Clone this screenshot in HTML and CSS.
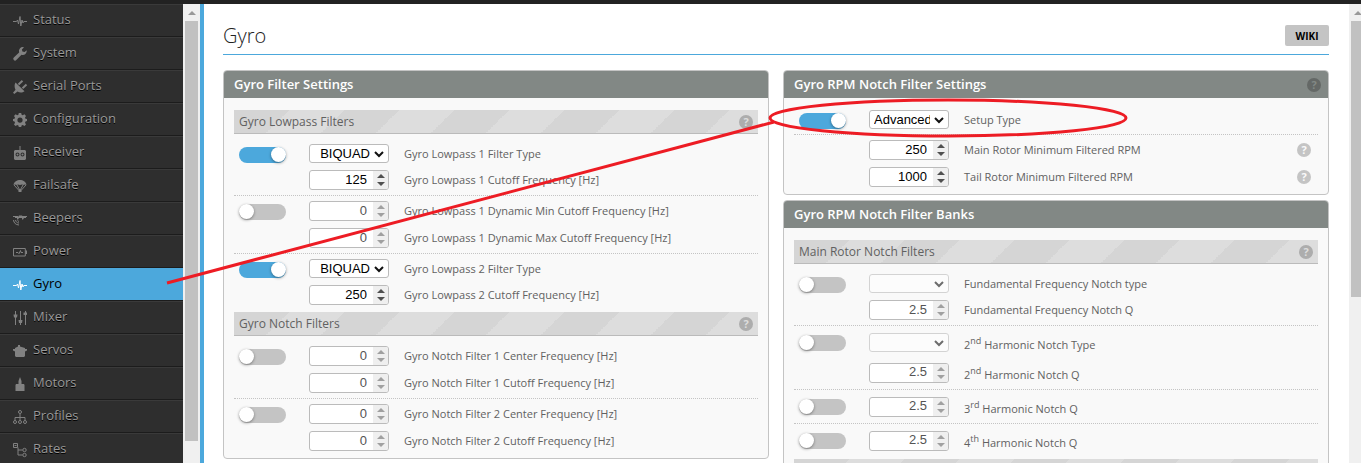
FILE: index.html
```html
<!DOCTYPE html>
<html lang="en">
<head>
<meta charset="utf-8">
<title>Gyro</title>
<link rel="stylesheet" href="styles.css">
</head>
<body>
<div class="topbar"></div>
<div class="app">
  <nav class="sidebar">
    <a class="nav-item" href="#"><svg class="nav-icon" viewBox="0 0 14 14"><path class="line" d="M0 7.500h3.500l1-1.500 1 4 1.500-7.500.800 9.500 1.200-6 1 3 .8-1.500H14"/></svg>Status</a>
    <a class="nav-item" href="#"><svg class="nav-icon" viewBox="0 0 14 14"><path d="M13.700 3.200a4 4 0 0 1-5.200 4.600L3.300 13a1.700 1.700 0 0 1-2.500-2.500l5.300-5.100A4 4 0 0 1 11 .3L8.900 2.500l.5 2.100 2.200.5z"/></svg>System</a>
    <a class="nav-item" href="#"><svg class="nav-icon" viewBox="0 0 14 14"><path d="M2.500 2.500l9 8.800c-2 1.600-5 1.600-7 .3L1.300 14 0 12.700l2.500-2.900C1.400 7.600 1.200 4.600 2.500 2.500z"/><path class="line thick" d="M5.500 4.500L9.500.8M9.500 8.300l4-3.700"/></svg>Serial Ports</a>
    <a class="nav-item" href="#"><svg class="nav-icon" viewBox="0 0 14 14"><path fill-rule="evenodd" d="M5.800 0h2.400l.4 1.800 1.200.5 1.600-1 1.600 1.600-1 1.600.5 1.200 1.500.4v2l-1.500.5-.5 1.200 1 1.600-1.600 1.600-1.600-1-1.200.5-.4 1.500H5.800l-.4-1.500-1.200-.5-1.600 1L1 11.400l1-1.600-.5-1.200L0 8.100v-2l1.500-.4.500-1.200-1-1.600 1.600-1.600 1.600 1 1.200-.5zM7 4.500a2.600 2.600 0 1 0 0 5.200 2.600 2.600 0 0 0 0-5.200z"/></svg>Configuration</a>
    <a class="nav-item" href="#"><svg class="nav-icon" viewBox="0 0 14 14"><path fill-rule="evenodd" d="M6.500 0h1v4H12l1 1v8l-1 1H2l-1-1V5l1-1h4.500zM4.500 6.500a2 2 0 1 0 0 4 2 2 0 0 0 0-4zm5 0a2 2 0 1 0 0 4 2 2 0 0 0 0-4z"/><circle cx="4.500" cy="8.500" r="1"/><circle cx="9.500" cy="8.500" r="1"/></svg>Receiver</a>
    <a class="nav-item" href="#"><svg class="nav-icon" viewBox="0 0 14 14"><path d="M.5 6C1 2.500 4 1 7 1s6 1.500 6.500 5L12 5.500 10.500 6 9 5.500 7 6l-2-.5L3.500 6 2 5.500z"/><path class="line" d="M1 6l5 5.500M4 6l2.700 5M10 6l-2.700 5M13 6l-5 5.500"/><path d="M5.500 10.500h3V13h-3z"/></svg>Failsafe</a>
    <a class="nav-item" href="#"><svg class="nav-icon" viewBox="0 0 14 14"><path d="M0 4h5v1H0zM9 4h5v1H9zM2 5h3l1-1.500h3L10 5h3v1h-2l-1 1.500H9V6H6L5 7.500H4V6H2z"/><path class="line" d="M.5 8c.3 3 2.200 4.800 5.500 5M2.500 8c.3 1.800 1.500 3 3.500 3M4.500 8.500c.3.500.8.8 1.500.8"/></svg>Beepers</a>
    <a class="nav-item" href="#"><svg class="nav-icon" viewBox="0 0 14 14"><path class="line" d="M.5 3.500h11.800v7.500H.5zM3 7.500h2l1 1.200L7.500 5.500 8 7.500h2"/><path d="M12.500 5.500H14v3.500h-1.500z"/></svg>Power</a>
    <a class="nav-item active" href="#"><svg class="nav-icon" viewBox="0 0 14 14"><path class="line" d="M0 7.500h3.500l1-1.500 1 4 1.500-7.500.800 9.500 1.200-6 1 3 .8-1.500H14"/></svg>Gyro</a>
    <a class="nav-item" href="#"><svg class="nav-icon" viewBox="0 0 14 14"><path class="line" d="M2.500 0v14M7.500 0v14M12.500 0v14"/><path d="M.5 3.500h4L4 6.500H1zM5.500 9h4L9 12H6zM10.500 1.500H14V4h-3.500z"/></svg>Mixer</a>
    <a class="nav-item" href="#"><svg class="nav-icon" viewBox="0 0 14 14"><path d="M2 4l3-1.500V1h2v1.500L12 4v1h2v1.500l-2 1V12l-1 1H3l-1-1V7.500l-2-1V5h2z"/></svg>Servos</a>
    <a class="nav-item" href="#"><svg class="nav-icon" viewBox="0 0 14 14"><path d="M7 0l1.500 4v3H11l.5 1v6h-9V8l.5-1h2.500V4z"/></svg>Motors</a>
    <a class="nav-item" href="#"><svg class="nav-icon" viewBox="0 0 14 14"><path class="line" d="M7 4v6.500M2 10.500V7.500h10v3"/><g class="line"><circle cx="7" cy="2" r="1.500"/><circle cx="2" cy="12" r="1.500"/><circle cx="7" cy="12" r="1.500"/><circle cx="12" cy="12" r="1.500"/></g></svg>Profiles</a>
    <a class="nav-item" href="#"><svg class="nav-icon" viewBox="0 0 14 14"><path class="line" d="M.5.5h4v4h-4zM1.500 2.500h2M5 4.500v7.500h4.500M5 7h4.500"/><g class="line"><circle cx="11.500" cy="7" r="1.700"/><circle cx="11.500" cy="12" r="1.700"/></g></svg>Rates</a>
  </nav>
  <div class="scrollbar side"><span class="scroll-arrow"></span><span class="scroll-thumb long"></span></div>
  <main class="content">
    <header class="page-head"><h1>Gyro</h1><button class="wiki" type="button">WIKI</button></header>
    <div class="columns">
      <div class="column">
        <section class="card">
          <div class="card-head"><h2>Gyro Filter Settings</h2></div>
          <div class="card-body">
            <div class="subhead"><h3>Gyro Lowpass Filters</h3><button class="help mid" type="button">?</button></div>
            <div class="group">
              <input class="toggle" type="checkbox" aria-label="Gyro Lowpass 1" checked>
              <div class="rows">
                <div class="row"><select id="lp1t"><option>BIQUAD</option></select><label for="lp1t">Gyro Lowpass 1 Filter Type</label></div>
                <div class="row"><span class="number"><input id="lp1c" type="number" value="125"><span class="spin"></span></span><label for="lp1c">Gyro Lowpass 1 Cutoff Frequency [Hz]</label></div>
              </div>
            </div>
            <div class="group">
              <input class="toggle" type="checkbox" aria-label="Gyro Lowpass 1 Dynamic">
              <div class="rows">
                <div class="row"><span class="number off"><input id="dmin" type="number" value="0" disabled><span class="spin"></span></span><label for="dmin">Gyro Lowpass 1 Dynamic Min Cutoff Frequency [Hz]</label></div>
                <div class="row"><span class="number off"><input id="dmax" type="number" value="0" disabled><span class="spin"></span></span><label for="dmax">Gyro Lowpass 1 Dynamic Max Cutoff Frequency [Hz]</label></div>
              </div>
            </div>
            <div class="group">
              <input class="toggle" type="checkbox" aria-label="Gyro Lowpass 2" checked>
              <div class="rows">
                <div class="row"><select id="lp2t"><option>BIQUAD</option></select><label for="lp2t">Gyro Lowpass 2 Filter Type</label></div>
                <div class="row"><span class="number"><input id="lp2c" type="number" value="250"><span class="spin"></span></span><label for="lp2c">Gyro Lowpass 2 Cutoff Frequency [Hz]</label></div>
              </div>
            </div>
            <div class="subhead"><h3>Gyro Notch Filters</h3><button class="help mid" type="button">?</button></div>
            <div class="group">
              <input class="toggle" type="checkbox" aria-label="Gyro Notch Filter 1">
              <div class="rows">
                <div class="row"><span class="number off"><input id="n1c" type="number" value="0" disabled><span class="spin"></span></span><label for="n1c">Gyro Notch Filter 1 Center Frequency [Hz]</label></div>
                <div class="row"><span class="number off"><input id="n1k" type="number" value="0" disabled><span class="spin"></span></span><label for="n1k">Gyro Notch Filter 1 Cutoff Frequency [Hz]</label></div>
              </div>
            </div>
            <div class="group">
              <input class="toggle" type="checkbox" aria-label="Gyro Notch Filter 2">
              <div class="rows">
                <div class="row"><span class="number off"><input id="n2c" type="number" value="0" disabled><span class="spin"></span></span><label for="n2c">Gyro Notch Filter 2 Center Frequency [Hz]</label></div>
                <div class="row"><span class="number off"><input id="n2k" type="number" value="0" disabled><span class="spin"></span></span><label for="n2k">Gyro Notch Filter 2 Cutoff Frequency [Hz]</label></div>
              </div>
            </div>
          </div>
        </section>
      </div>
      <div class="column">
        <section class="card">
          <div class="card-head"><h2>Gyro RPM Notch Filter Settings</h2><button class="help dark" type="button">?</button></div>
          <div class="card-body">
            <div class="group">
              <input class="toggle" type="checkbox" aria-label="RPM Notch Filter" checked>
              <div class="rows">
                <div class="row"><select id="setup"><option>Advanced</option></select><label for="setup">Setup Type</label></div>
              </div>
            </div>
            <div class="group">
              <span class="no-toggle"></span>
              <div class="rows">
                <div class="row"><span class="number"><input id="mrpm" type="number" value="250"><span class="spin"></span></span><label for="mrpm">Main Rotor Minimum Filtered RPM</label><button class="help" type="button">?</button></div>
                <div class="row"><span class="number"><input id="trpm" type="number" value="1000"><span class="spin"></span></span><label for="trpm">Tail Rotor Minimum Filtered RPM</label><button class="help" type="button">?</button></div>
              </div>
            </div>
          </div>
        </section>
        <section class="card">
          <div class="card-head"><h2>Gyro RPM Notch Filter Banks</h2></div>
          <div class="card-body">
            <div class="subhead"><h3>Main Rotor Notch Filters</h3><button class="help mid" type="button">?</button></div>
            <div class="group">
              <input class="toggle" type="checkbox" aria-label="Fundamental">
              <div class="rows">
                <div class="row"><select id="f1t" disabled><option></option></select><label for="f1t">Fundamental Frequency Notch type</label></div>
                <div class="row"><span class="number off"><input id="f1q" type="number" step="0.1" value="2.5" disabled><span class="spin"></span></span><label for="f1q">Fundamental Frequency Notch Q</label></div>
              </div>
            </div>
            <div class="group tall">
              <input class="toggle" type="checkbox" aria-label="2nd Harmonic">
              <div class="rows">
                <div class="row"><select id="f2t" disabled><option></option></select><label for="f2t">2<sup>nd</sup> Harmonic Notch Type</label></div>
                <div class="row"><span class="number off"><input id="f2q" type="number" step="0.1" value="2.5" disabled><span class="spin"></span></span><label for="f2q">2<sup>nd</sup> Harmonic Notch Q</label></div>
              </div>
            </div>
            <div class="group tall">
              <input class="toggle" type="checkbox" aria-label="3rd Harmonic">
              <div class="rows">
                <div class="row"><span class="number off"><input id="f3q" type="number" step="0.1" value="2.5" disabled><span class="spin"></span></span><label for="f3q">3<sup>rd</sup> Harmonic Notch Q</label></div>
              </div>
            </div>
            <div class="group tall">
              <input class="toggle" type="checkbox" aria-label="4th Harmonic">
              <div class="rows">
                <div class="row"><span class="number off"><input id="f4q" type="number" step="0.1" value="2.5" disabled><span class="spin"></span></span><label for="f4q">4<sup>th</sup> Harmonic Notch Q</label></div>
              </div>
            </div>
            <div class="subhead"></div>
          </div>
        </section>
      </div>
    </div>
  </main>
  <div class="scrollbar page"><span class="scroll-arrow"></span><span class="scroll-thumb"></span></div>
</div>
<svg class="markup" width="1361" height="463" viewBox="0 0 1361 463"><path d="M167 283L774 122"/><ellipse cx="948" cy="118" rx="178" ry="18"/></svg>
</body>
</html>
```
FILE: styles.css
```css
* { box-sizing: border-box; }
html, body { height: 100%; }
body {
  margin: 0;
  display: flex;
  flex-direction: column;
  overflow: hidden;
  background: #fff;
  color: #616161;
  font-family: "Open Sans", sans-serif;
  font-size: 11px;
}
h1, h2, h3 { margin: 0; font-weight: 400; }
button { margin: 0; padding: 0; border: 0; font-family: inherit; }
.topbar { flex: none; height: 4px; background: #222; }
.app { flex: 1; min-height: 0; display: flex; }

.sidebar { width: 183px; flex: none; overflow: hidden; background: #2e2e2e; }
.nav-item {
  display: flex;
  align-items: center;
  gap: 6px;
  height: 33px;
  padding: 0 13px 4px;
  border-top: 1px solid #3a3a3a;
  border-bottom: 1px solid #1c1c1c;
  color: #999;
  font-size: 13px;
  text-decoration: none;
  text-shadow: 0 1px #000;
}
.nav-item.active { background: #4ca8dc; border-top-color: #4ca8dc; color: #000; text-shadow: none; }
.nav-icon { width: 14px; height: 14px; margin-top: 4px; fill: #818181; stroke: none; overflow: visible; }
.nav-icon .line { fill: none; stroke: #818181; stroke-width: 1; }
.nav-icon .thick { stroke-width: 2; }
.active .nav-icon .line { stroke: #fff; }

.scrollbar {
  flex: none;
  display: flex;
  flex-direction: column;
  align-items: center;
  gap: 6px;
  width: 17px;
  padding: 7px 2px 0;
  background: #f0f0f0;
}
.scrollbar.page { margin-right: -5px; }
.scroll-arrow {
  border: 4px solid transparent;
  border-top: 0;
  border-bottom-color: #999;
}
.scroll-thumb { width: 13px; height: 61%; background: #c1c1c1; }
.scroll-thumb.long { height: 93%; }

.content {
  flex: 1;
  min-width: 0;
  overflow: hidden;
  padding: 21px 20px 0 19px;
  border-left: 4px solid #4ca8dc;
}
.page-head {
  display: flex;
  align-items: flex-start;
  justify-content: space-between;
  height: 30px;
  border-bottom: 1px solid #4ca8dc;
}
.page-head h1 { font-size: 20px; line-height: 21px; font-weight: 300; color: #222; }
.wiki {
  width: 44px;
  height: 21px;
  border-radius: 2px;
  background: #c4c4c4;
  color: #000;
  font-size: 10px;
  font-weight: 700;
}
.columns { display: flex; align-items: flex-start; gap: 14px; padding-top: 15px; }
.column { flex: 1; min-width: 0; display: grid; gap: 5px; }

.card { overflow: hidden; border: 1px solid #c4c4c4; border-radius: 4px; background: #f9f9f9; }
.card-head {
  display: flex;
  align-items: center;
  justify-content: space-between;
  height: 27px;
  padding: 0 7px 0 10px;
  background: #828885;
}
.card-head h2 { padding-bottom: 2px; color: #fff; font-size: 13px; font-weight: 600; }
.card-body { padding: 12px 10px 7px; }
.subhead {
  display: flex;
  align-items: center;
  justify-content: space-between;
  height: 24px;
  margin-bottom: 10px;
  padding: 0 5px;
  border-bottom: 1px solid #bbb;
  background: linear-gradient(135deg, #d5d5d5 25%, #ddd 25% 50%, #d5d5d5 50% 75%, #ddd 75%) 0 0 / 110px 110px;
}
.subhead h3 { font-size: 12px; }
.group + .subhead { margin-top: 7px; }
.group { display: flex; padding-left: 5px; }
.group + .group { margin-top: 5px; padding-top: 5px; border-top: 1px dotted #c4c4c4; }
.rows { flex: 1; display: grid; gap: 7px; }
.row { display: flex; align-items: center; }
.tall .row { min-height: 23px; }
.row label { flex: 1; margin-left: 15px; line-height: 16px; }
.row .help { margin-right: 7px; }
sup { font-size: 9px; }

.toggle {
  appearance: none;
  flex: none;
  width: 47px;
  height: 16px;
  margin: 3px 23px 0 0;
  border-radius: 8px;
  background: #c4c4c4;
}
.tall .toggle { margin-top: 4px; }
.toggle::before {
  content: "";
  display: block;
  width: 15px;
  height: 15px;
  border-radius: 50%;
  background: #fff;
  box-shadow: 0 1px 3px #0006;
}
.toggle:checked { background: #4ca8dc; }
.toggle:checked::before { margin-left: 32px; }
.no-toggle { width: 70px; }

select {
  appearance: none;
  width: 80px;
  height: 19px;
  padding: 0 18px 0 4px;
  border: 1px solid #bbb;
  border-radius: 3px;
  background: #fff url("data:image/svg+xml,%3Csvg xmlns='http://www.w3.org/2000/svg' width='10' height='7'%3E%3Cpath d='M1 1l4 4 4-4' fill='none' stroke='%23111' stroke-width='2'/%3E%3C/svg%3E") no-repeat right 4px top 6px;
  color: #000;
  font: 13px "Liberation Sans", Arial, sans-serif;
  text-align: right;
  text-align-last: right;
}
select:disabled { opacity: .6; }
.number {
  display: flex;
  width: 80px;
  height: 20px;
  overflow: hidden;
  border: 1px solid #bbb;
  border-radius: 3px;
  background: #fff;
}
.number input {
  flex: 1;
  min-width: 0;
  appearance: textfield;
  padding: 0 6px 2px 0;
  border: 0;
  background: none;
  color: #000;
  font: 13px "Liberation Sans", Arial, sans-serif;
  text-align: right;
}
.number input::-webkit-inner-spin-button { appearance: none; margin: 0; }
.number.off input { color: #545454; }
.spin {
  display: flex;
  flex-direction: column;
  align-items: center;
  justify-content: center;
  gap: 4px;
  width: 15px;
  background: #efefef;
}
.spin::before, .spin::after { content: ""; border: 4px solid transparent; }
.spin::before { border-top: 0; border-bottom-color: #505050; }
.spin::after { border-bottom: 0; border-top-color: #505050; }
.off .spin::before { border-bottom-color: #a0a0a0; }
.off .spin::after { border-top-color: #a0a0a0; }

.help {
  flex: none;
  width: 14px;
  height: 14px;
  border-radius: 50%;
  background: #c4c4c4;
  color: #f9f9f9;
  font-size: 11px;
  font-weight: 700;
  line-height: 14px;
}
.help.mid { background: #adadad; color: #ddd; }
.help.dark { background: #646866; color: #828885; }

.markup { position: absolute; left: 0; top: 0; fill: none; stroke: #ed1c24; stroke-width: 3; pointer-events: none; }
```
